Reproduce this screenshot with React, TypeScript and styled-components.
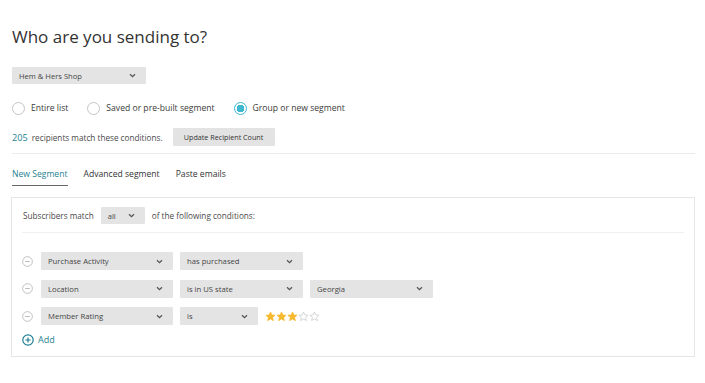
import styled, { createGlobalStyle } from "styled-components";

const GlobalStyle = createGlobalStyle`
  body {
    margin: 0;
    background: #ffffff;
    font-family: "Open Sans", "Liberation Sans", sans-serif;
    color: #3e3e3e;
  }
`;

const conditions = [
  { field: "Purchase Activity", op: "has purchased", opWidth: 123, value: "Georgia", showValue: false, stars: 0 },
  { field: "Location", op: "is in US state", opWidth: 123, value: "Georgia", showValue: true, stars: 0 },
  { field: "Member Rating", op: "is", opWidth: 78, value: "", showValue: false, stars: 3 },
];

function Chevron() {
  return (
    <svg width="7" height="5" viewBox="0 0 7 5">
      <path d="M1 1.2 L3.5 3.6 L6 1.2" fill="none" stroke="#555" strokeWidth="1.3" />
    </svg>
  );
}

function Dropdown({ label, width, tall }: { label: string; width: number; tall?: boolean }) {
  return (
    <Select style={{ width }} $tall={tall}>
      <span>{label}</span>
      <Chevron />
    </Select>
  );
}

function Star({ filled }: { filled: boolean }) {
  return (
    <svg width="11" height="11" viewBox="0 0 24 24">
      <path
        d="M12 2 L14.9 8.6 L22 9.3 L16.6 14 L18.2 21 L12 17.3 L5.8 21 L7.4 14 L2 9.3 L9.1 8.6 Z"
        fill={filled ? "#f5b82e" : "none"}
        stroke={filled ? "#f5b82e" : "#c8c8c8"}
        strokeWidth="1.6"
        strokeLinejoin="round"
      />
    </svg>
  );
}

function App() {
  return (
    <>
      <GlobalStyle />
      <Page>
        <Title>Who are you sending to?</Title>
        <Dropdown label="Hem & Hers Shop" width={134} />
        <RadioRow>
          <RadioItem>
            <Radio />
            Entire list
          </RadioItem>
          <RadioItem>
            <Radio />
            Saved or pre-built segment
          </RadioItem>
          <RadioItem>
            <Radio $checked />
            Group or new segment
          </RadioItem>
        </RadioRow>
        <CountRow>
          <Count>205</Count>
          <span>recipients match these conditions.</span>
          <GrayButton>Update Recipient Count</GrayButton>
        </CountRow>
        <Divider />
        <Tabs>
          <Tab $active>New Segment</Tab>
          <Tab>Advanced segment</Tab>
          <Tab>Paste emails</Tab>
        </Tabs>
        <Panel>
          <MatchRow>
            <span>Subscribers match</span>
            <Dropdown label="all" width={44} />
            <span>of the following conditions:</span>
          </MatchRow>
          <PanelDivider />
          <ConditionList>
            {conditions.map((c) => (
              <ConditionRow key={c.field}>
                <RemoveIcon>
                  <svg width="11" height="11" viewBox="0 0 12 12">
                    <circle cx="6" cy="6" r="5.3" fill="none" stroke="#b5b5b5" strokeWidth="0.9" />
                    <path d="M3.5 6 H8.5" stroke="#b5b5b5" strokeWidth="1" />
                  </svg>
                </RemoveIcon>
                <Dropdown label={c.field} width={132} tall />
                <Dropdown label={c.op} width={c.opWidth} tall />
                {c.showValue && <Dropdown label={c.value} width={123} tall />}
                {c.stars > 0 && (
                  <Stars>
                    {[0, 1, 2, 3, 4].map((i) => (
                      <Star key={i} filled={i < c.stars} />
                    ))}
                  </Stars>
                )}
              </ConditionRow>
            ))}
          </ConditionList>
          <AddLink>
            <svg width="12" height="12" viewBox="0 0 12 12">
              <circle cx="6" cy="6" r="5.2" fill="none" stroke="#1f7f92" strokeWidth="1.2" />
              <path d="M3.4 6 H8.6 M6 3.4 V8.6" stroke="#1f7f92" strokeWidth="1.2" />
            </svg>
            Add
          </AddLink>
        </Panel>
      </Page>
    </>
  );
}

export default App;

const Page = styled.div`
  padding: 25px 10px 0 12px;
  display: flex;
  flex-direction: column;
  align-items: flex-start;
`;

const Title = styled.h1`
  margin: 0 0 18px;
  font-size: 17px;
  font-weight: 400;
  line-height: 24px;
  color: #333;
`;

const Select = styled.div<{ $tall?: boolean }>`
  height: ${(p) => (p.$tall ? "18px" : "17px")};
  box-sizing: border-box;
  padding: 0 10px 0 7px;
  background: #e4e4e4;
  border-radius: 1px;
  display: flex;
  align-items: center;
  justify-content: space-between;
  font-size: ${(p) => (p.$tall ? "7.7px" : "7.6px")};
  color: #444;
  flex-shrink: 0;
`;

const RadioRow = styled.div`
  display: flex;
  margin-top: 16px;
  font-size: 8.6px;
  color: #3a3a3a;
`;

const RadioItem = styled.label`
  display: flex;
  align-items: center;
  gap: 6px;
  margin-right: 19px;
  height: 16px;
`;

const Radio = styled.span<{ $checked?: boolean }>`
  width: 13px;
  height: 13px;
  box-sizing: border-box;
  border-radius: 50%;
  border: 1px solid ${(p) => (p.$checked ? "#3db8cf" : "#c4c4c4")};
  background: ${(p) => (p.$checked ? "radial-gradient(circle, #3db8cf 0 3.6px, #fff 4px)" : "#fff")};
  ${(p) => p.$checked && "border-width: 1.5px;"}
`;

const CountRow = styled.div`
  display: flex;
  align-items: center;
  gap: 4px;
  margin-top: 12px;
  font-size: 8.2px;
  color: #4a4a4a;
`;

const Count = styled.span`
  color: #1f7f92;
  font-size: 9.2px;
`;

const GrayButton = styled.button`
  margin-left: 6px;
  height: 18px;
  width: 102px;
  padding: 0;
  border: none;
  border-radius: 1px;
  background: #e3e3e3;
  font-family: inherit;
  font-size: 7.2px;
  color: #333;
`;

const Divider = styled.div`
  align-self: stretch;
  height: 1px;
  background: #ebebeb;
  margin-top: 7px;
`;

const Tabs = styled.div`
  display: flex;
  gap: 16px;
  margin-top: 14px;
`;

const Tab = styled.div<{ $active?: boolean }>`
  font-size: 8.6px;
  color: ${(p) => (p.$active ? "#1f7f92" : "#333")};
  padding-bottom: 5px;
  border-bottom: 1.5px solid ${(p) => (p.$active ? "#666" : "transparent")};
`;

const Panel = styled.div`
  align-self: stretch;
  margin-top: 11px;
  margin-left: -1px;
  border: 1px solid #e6e6e6;
  padding: 9px 10px 10px 10px;
  display: flex;
  flex-direction: column;
  align-items: flex-start;
`;

const MatchRow = styled.div`
  display: flex;
  align-items: center;
  gap: 7px;
  font-size: 8.2px;
  color: #4a4a4a;
  padding-left: 1px;
`;

const PanelDivider = styled.div`
  align-self: stretch;
  height: 1px;
  background: #efefef;
  margin-top: 8px;
`;

const ConditionList = styled.div`
  display: flex;
  flex-direction: column;
  gap: 9.5px;
  margin-top: 19px;
`;

const ConditionRow = styled.div`
  display: flex;
  align-items: center;
  gap: 7px;
`;

const RemoveIcon = styled.span`
  display: flex;
  width: 11px;
  margin-right: 1px;
`;

const Stars = styled.div`
  display: flex;
`;

const AddLink = styled.div`
  display: flex;
  align-items: center;
  gap: 4px;
  margin-top: 8px;
  font-size: 9px;
  color: #1f7f92;
`;
